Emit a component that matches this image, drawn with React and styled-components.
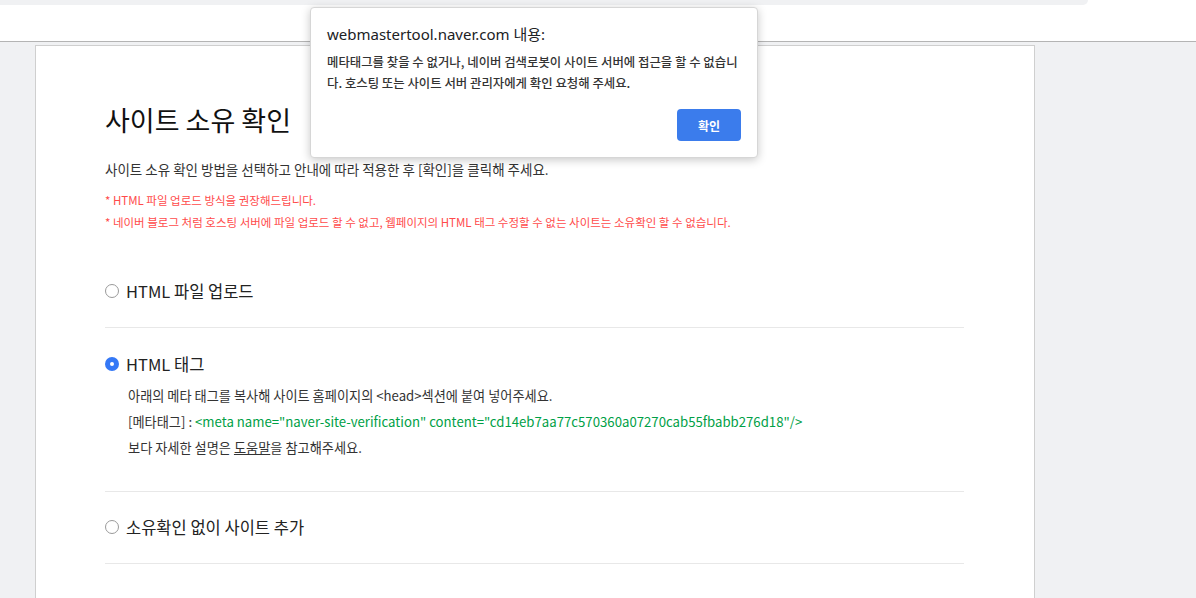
import styled, { createGlobalStyle } from 'styled-components';

const GlobalStyle = createGlobalStyle`
    body {
        margin: 0;
        background: #f0f1f3;
        font-family: "Noto Sans", "Noto Sans CJK KR", sans-serif;
        overflow: hidden;
    }
`

const Page = styled.div`
    position: relative;
    height: 598px;
`

const TopBar = styled.div`
    height: 41px;
    background: #fff;
    border-bottom: 1px solid #b4b4b4;
`

const TabStrip = styled.div`
    width: 1088px;
    height: 5px;
    background: #f0f1f3;
    border-bottom-right-radius: 10px;
`

const Main = styled.div`
    padding: 3px 0 0 35px;
`

const Card = styled.div`
    width: 1000px;
    min-height: 560px;
    background: #fff;
    border: 1px solid #cfcfcf;
    border-bottom: none;
    padding: 56px 70px 0 69px;
    box-sizing: border-box;
`

const Title = styled.h1`
    margin: 0;
    font-size: 27px;
    line-height: 36px;
    font-weight: 400;
    color: #111;
    font-family: "Noto Sans CJK KR", sans-serif;
`

const Desc = styled.p`
    margin: 21px 0 10px;
    font-size: 13.5px;
    line-height: 20px;
    color: #333;
    font-family: "Noto Sans CJK KR", sans-serif;
`

const Note = styled.p`
    margin: 0;
    font-size: 11.5px;
    line-height: 22px;
    color: #ff4b4b;
    font-family: "Noto Sans CJK KR", sans-serif;
`

const OptionList = styled.div`
    margin-top: 22px;
`

const Option = styled.div`
    padding: ${p => p.$top || 24}px 0 ${p => p.$bottom || 24}px;
    border-bottom: 1px solid #e8e8e8;
`

const OptionRow = styled.label`
    display: flex;
    align-items: center;
    gap: 7px;
    height: 24px;
    font-size: 16.5px;
    color: #222;
    font-family: "Noto Sans CJK KR", sans-serif;
`

const Radio = styled.span`
    width: 14px;
    height: 14px;
    border-radius: 50%;
    box-sizing: border-box;
    display: inline-flex;
    align-items: center;
    justify-content: center;
    border: ${p => p.$checked ? 'none' : '1px solid #9a9a9a'};
    background: ${p => p.$checked ? '#3478f6' : '#fff'};

    &::after {
        content: '';
        display: ${p => p.$checked ? 'block' : 'none'};
        width: 4px;
        height: 4px;
        border-radius: 50%;
        background: #fff;
    }
`

const Guide = styled.div`
    margin-top: 7px;
    padding-left: 23px;
`

const GuideLine = styled.p`
    margin: 0;
    font-size: 13.2px;
    line-height: 26px;
    color: #333;
    font-family: "Noto Sans CJK KR", sans-serif;
`

const MetaTag = styled.span`
    color: #00a046;
`

const HelpLink = styled.a`
    color: #333;
    text-decoration: underline;
`

const Dialog = styled.div`
    position: absolute;
    left: 310px;
    top: 7px;
    width: 448px;
    box-sizing: border-box;
    padding: 16px;
    background: #fff;
    border: 1px solid #d6d6d6;
    border-radius: 4px;
    box-shadow: 0 2px 10px rgba(0, 0, 0, 0.22);
`

const DialogTitle = styled.div`
    font-size: 15px;
    line-height: 20px;
    color: #202124;
`

const DialogBody = styled.div`
    margin-top: 8px;
    font-size: 12.4px;
    line-height: 21px;
    font-weight: 500;
    color: #333;
    font-family: "Noto Sans CJK KR", sans-serif;
    white-space: nowrap;
`

const DialogFooter = styled.div`
    display: flex;
    justify-content: flex-end;
    margin-top: 15px;
`

const OkButton = styled.button`
    width: 64px;
    height: 32px;
    border: none;
    border-radius: 4px;
    background: #3b7cec;
    color: #fff;
    font-size: 12px;
    font-weight: 700;
    font-family: "Noto Sans CJK KR", sans-serif;
`

const App = () => {
    return (
    <Page>
        <GlobalStyle />
        <TopBar>
            <TabStrip />
        </TopBar>
        <Main>
            <Card>
                <Title>사이트 소유 확인</Title>
                <Desc>사이트 소유 확인 방법을 선택하고 안내에 따라 적용한 후 [확인]을 클릭해 주세요.</Desc>
                <Note>* HTML 파일 업로드 방식을 권장해드립니다.</Note>
                <Note>* 네이버 블로그 처럼 호스팅 서버에 파일 업로드 할 수 없고, 웹페이지의 HTML 태그 수정할 수 없는 사이트는 소유확인 할 수 없습니다.</Note>
                <OptionList>
                    <Option>
                        <OptionRow><Radio />HTML 파일 업로드</OptionRow>
                    </Option>
                    <Option $bottom={30}>
                        <OptionRow><Radio $checked />HTML 태그</OptionRow>
                        <Guide>
                            <GuideLine>아래의 메타 태그를 복사해 사이트 홈페이지의 &lt;head&gt;섹션에 붙여 넣어주세요.</GuideLine>
                            <GuideLine>[메타태그] : <MetaTag>&lt;meta name="naver-site-verification" content="cd14eb7aa77c570360a07270cab55fbabb276d18"/&gt;</MetaTag></GuideLine>
                            <GuideLine>보다 자세한 설명은 <HelpLink>도움말</HelpLink>을 참고해주세요.</GuideLine>
                        </Guide>
                    </Option>
                    <Option $top={23}>
                        <OptionRow><Radio />소유확인 없이 사이트 추가</OptionRow>
                    </Option>
                </OptionList>
            </Card>
        </Main>
        <Dialog>
            <DialogTitle>webmastertool.naver.com 내용:</DialogTitle>
            <DialogBody>
                메타태그를 찾을 수 없거나, 네이버 검색로봇이 사이트 서버에 접근을 할 수 없습니<br />
                다. 호스팅 또는 사이트 서버 관리자에게 확인 요청해 주세요.
            </DialogBody>
            <DialogFooter>
                <OkButton>확인</OkButton>
            </DialogFooter>
        </Dialog>
    </Page>
    )
}

export default App
